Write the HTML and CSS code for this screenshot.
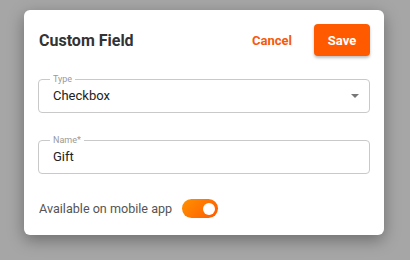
FILE: index.html
```html
<!DOCTYPE html>
<html>
<head>
<meta charset="utf-8">
<link rel="stylesheet" href="styles.css">
</head>
<body>
<div class="dialog">
  <div class="header">
    <h1 class="title">Custom Field</h1>
    <div class="actions">
      <button class="btn-text">Cancel</button>
      <button class="btn-primary">Save</button>
    </div>
  </div>
  <fieldset class="field select">
    <legend>Type</legend>
    <span class="value">Checkbox</span>
    <svg class="arrow" width="8" height="4" viewBox="0 0 8 4"><path d="M0 0h8L4 4z" fill="#777"/></svg>
  </fieldset>
  <fieldset class="field">
    <legend>Name*</legend>
    <span class="value">Gift</span>
  </fieldset>
  <div class="toggle-row">
    <span class="toggle-label">Available on mobile app</span>
    <span class="toggle"><span class="knob"></span></span>
  </div>
</div>
</body>
</html>
```
FILE: styles.css
```css
html, body {
  margin: 0;
  padding: 0;
  background: #a6a6a6;
  font-family: Roboto, "Liberation Sans", sans-serif;
}
body {
  padding: 10px 0 0 24px;
  height: 250px;
  overflow: hidden;
}
.dialog {
  box-sizing: border-box;
  width: 360px;
  height: 225px;
  background: #fff;
  border-radius: 6px;
  box-shadow: 0 5px 16px rgba(0, 0, 0, 0.35);
  padding: 14px 14px 0 14px;
}
.header {
  display: flex;
  align-items: center;
  justify-content: space-between;
  height: 32px;
  margin-bottom: 22px;
}
.title {
  margin: 0 0 0 1px;
  font-size: 16px;
  font-weight: 700;
  color: #333;
}
.actions {
  display: flex;
  align-items: center;
  gap: 14px;
}
.btn-text {
  border: 0;
  background: none;
  font-family: inherit;
  font-weight: 700;
  font-size: 13px;
  color: #f55a0c;
  padding: 0 8px;
  cursor: pointer;
}
.btn-primary {
  border: 0;
  width: 56px;
  height: 32px;
  border-radius: 4px;
  background: #ff5a00;
  color: #fff;
  font-family: inherit;
  font-weight: 700;
  font-size: 13px;
  box-shadow: 0 2px 3px rgba(0, 0, 0, 0.25);
}
.field {
  position: relative;
  box-sizing: border-box;
  margin: 0 0 26px 0;
  height: 38px;
  border: 1px solid #c9c9c9;
  border-radius: 4px;
  padding: 0 14px;
  display: flex;
  align-items: center;
  margin-top: -3px;
}
.field legend {
  font-size: 9px;
  color: #999;
  padding: 0 3px;
  margin-left: -3px;
  line-height: 9px;
}
.value {
  font-size: 13px;
  color: #222;
  margin-top: -5px;
}
.arrow {
  margin-left: auto;
  margin-right: -4px;
  margin-top: -5px;
}
.toggle-row {
  display: flex;
  align-items: center;
  gap: 10px;
  margin-top: -1px;
}
.toggle-label {
  font-size: 12.6px;
  color: #555;
  margin-left: 1px;
}
.toggle {
  display: flex;
  align-items: center;
  justify-content: flex-end;
  box-sizing: border-box;
  width: 36px;
  height: 19px;
  border-radius: 10px;
  background: linear-gradient(135deg, #ff9100, #ff5a00);
  padding-right: 3px;
}
.knob {
  width: 12px;
  height: 12px;
  border-radius: 50%;
  background: #fff;
}
```
